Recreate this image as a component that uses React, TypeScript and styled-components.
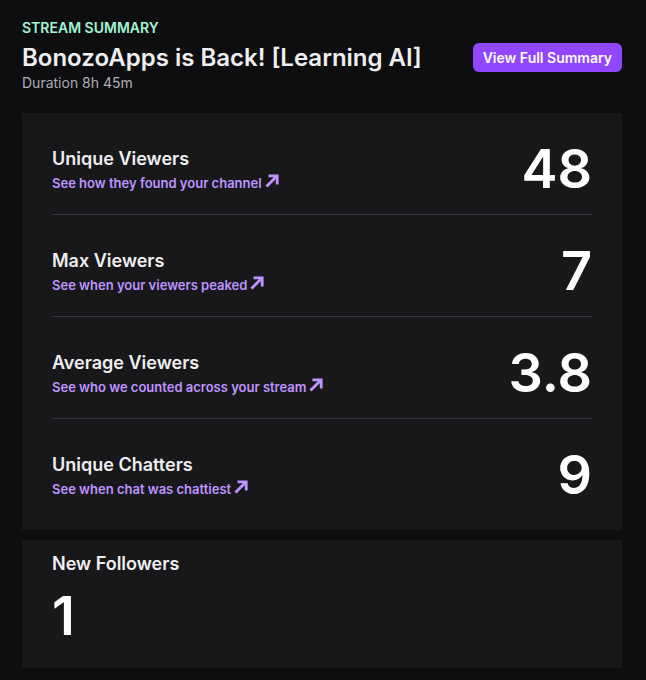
import React from "react";
import styled, { createGlobalStyle } from "styled-components";

type statType = {
  label: string;
  link: string;
  value: string;
};

const stats: statType[] = [
  { label: "Unique Viewers", link: "See how they found your channel", value: "48" },
  { label: "Max Viewers", link: "See when your viewers peaked", value: "7" },
  { label: "Average Viewers", link: "See who we counted across your stream", value: "3.8" },
  { label: "Unique Chatters", link: "See when chat was chattiest", value: "9" },
];

const ArrowIcon: React.FC = () => (
  <svg width="14" height="14" viewBox="0 0 14 14" fill="none">
    <path d="M1.5 12.5 L12 2" stroke="currentColor" strokeWidth="2.8" />
    <path d="M3.5 1.8 H12.2 V10.5" stroke="currentColor" strokeWidth="2.8" />
  </svg>
);

const App: React.FC = () => {
  return (
    <>
      <GlobalStyle />
      <Page>
        <Header>
          <Eyebrow>STREAM SUMMARY</Eyebrow>
          <TitleRow>
            <Title>BonozoApps is Back! [Learning AI]</Title>
            <SummaryBtn>View Full Summary</SummaryBtn>
          </TitleRow>
          <Duration>Duration 8h 45m</Duration>
        </Header>
        <StatsCard>
          {stats.map((s) => (
            <StatRow key={s.label}>
              <StatInfo>
                <StatLabel>{s.label}</StatLabel>
                <StatLink href="#">
                  {s.link}
                  <ArrowIcon />
                </StatLink>
              </StatInfo>
              <StatValue>{s.value}</StatValue>
            </StatRow>
          ))}
        </StatsCard>
        <FollowCard>
          <StatLabel>New Followers</StatLabel>
          <FollowValue>1</FollowValue>
        </FollowCard>
      </Page>
    </>
  );
};

const GlobalStyle = createGlobalStyle`
  body {
    margin: 0;
    background: #0e0e10;
    font-family: Inter, "Liberation Sans", sans-serif;
    color: #efeff1;
  }
`;

const Page = styled.div`
  width: 600px;
  padding: 18px 0 12px 22px;
  display: flex;
  flex-direction: column;
`;

const Header = styled.header`
  display: flex;
  flex-direction: column;
  margin-bottom: 20px;
`;

const Eyebrow = styled.div`
  font-size: 14px;
  line-height: 20px;
  font-weight: 600;
  color: #a3f5d6;
`;

const TitleRow = styled.div`
  display: flex;
  justify-content: space-between;
  align-items: center;
  margin-top: 5px;
`;

const Title = styled.h1`
  margin: 0;
  font-size: 24px;
  line-height: 28px;
  font-weight: 600;
  color: #efeff1;
`;

const SummaryBtn = styled.button`
  height: 29px;
  padding: 0 10px;
  border: none;
  border-radius: 6px;
  background: #9147ff;
  color: #fff;
  font-family: inherit;
  font-size: 14px;
  font-weight: 600;
  cursor: pointer;
`;

const Duration = styled.div`
  margin-top: 1px;
  font-size: 14px;
  line-height: 20px;
  color: #adadb8;
`;

const StatsCard = styled.section`
  background: #18181b;
  padding: 0 30px 10px;
`;

const StatRow = styled.div`
  display: flex;
  justify-content: space-between;
  align-items: center;
  padding: 29px 0 18px;
  border-bottom: 1px solid #35353b;

  &:last-child {
    border-bottom: none;
  }
`;

const StatInfo = styled.div`
  display: flex;
  flex-direction: column;
  gap: 2px;
`;

const StatLabel = styled.div`
  font-size: 18px;
  line-height: 25px;
  font-weight: 600;
  color: #efeff1;
`;

const StatLink = styled.a`
  display: flex;
  align-items: center;
  gap: 3px;
  font-size: 13px;
  line-height: 20px;
  font-weight: 600;
  color: #bf94ff;
  text-decoration: none;

  svg {
    margin-top: -4px;
  }
`;

const StatValue = styled.div`
  font-size: 54px;
  line-height: 54px;
  font-weight: 600;
  color: #fff;
`;

const FollowCard = styled.section`
  margin-top: 10px;
  background: #18181b;
  padding: 11px 30px 25px;
  display: flex;
  flex-direction: column;
`;

const FollowValue = styled(StatValue)`
  margin-top: 13px;
`;

export default App;
